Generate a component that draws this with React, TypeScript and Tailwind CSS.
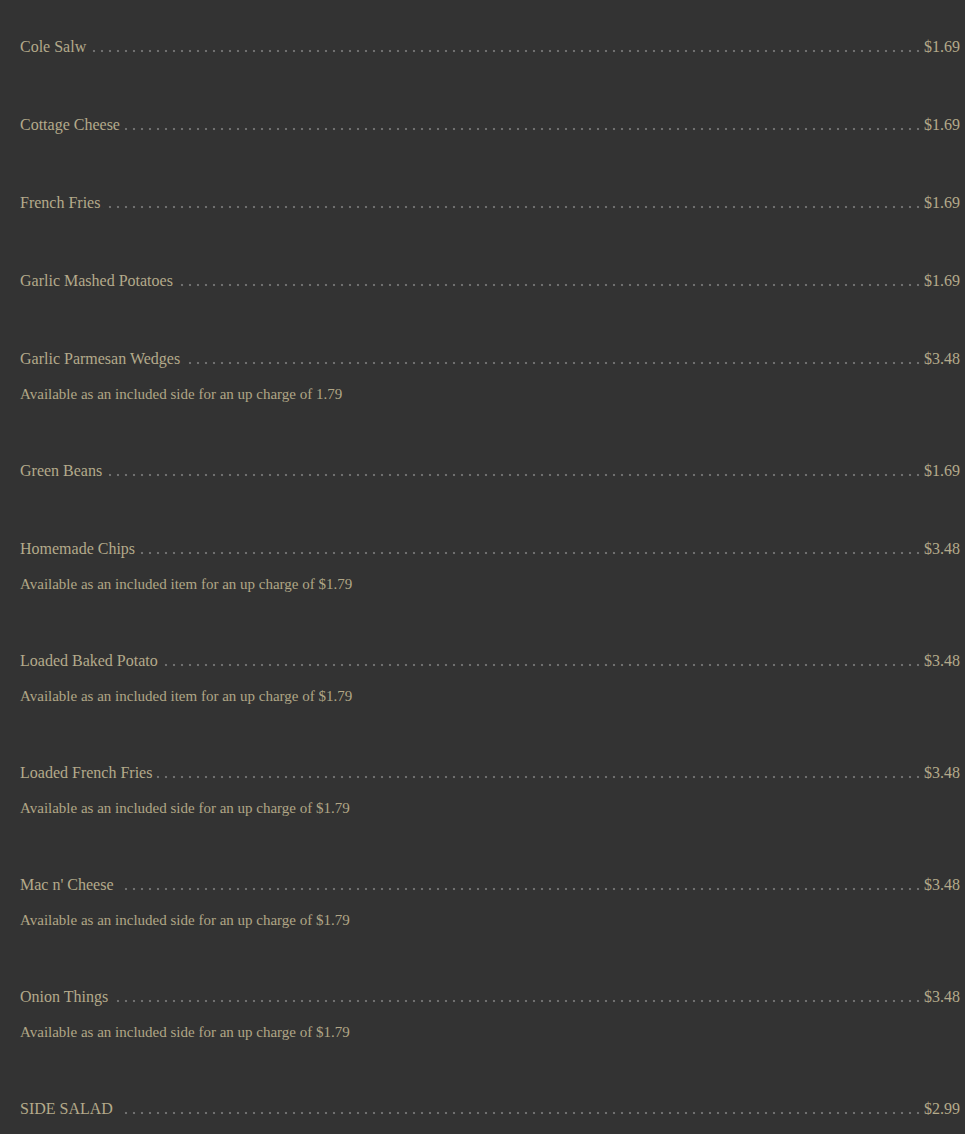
import React from "react";

type Item = {
  name: string;
  price: string;
  note?: string;
};

const items: Item[] = [
  { name: "Cole Salw", price: "$1.69" },
  { name: "Cottage Cheese", price: "$1.69" },
  { name: "French Fries", price: "$1.69" },
  { name: "Garlic Mashed Potatoes", price: "$1.69" },
  {
    name: "Garlic Parmesan Wedges",
    price: "$3.48",
    note: "Available as an included side for an up charge of 1.79",
  },
  { name: "Green Beans", price: "$1.69" },
  {
    name: "Homemade Chips",
    price: "$3.48",
    note: "Available as an included item for an up charge of $1.79",
  },
  {
    name: "Loaded Baked Potato",
    price: "$3.48",
    note: "Available as an included item for an up charge of $1.79",
  },
  {
    name: "Loaded French Fries",
    price: "$3.48",
    note: "Available as an included side for an up charge of $1.79",
  },
  {
    name: "Mac n' Cheese\u00a0",
    price: "$3.48",
    note: "Available as an included side for an up charge of $1.79",
  },
  {
    name: "Onion Things",
    price: "$3.48",
    note: "Available as an included side for an up charge of $1.79",
  },
  {
    name: "SIDE SALAD\u00a0",
    price: "$2.99",
    note: "Available as an included side for an up charge of $1.79",
  },
];

const MenuRow: React.FC<{ item: Item }> = ({ item }) => {
  return (
    <div className={item.note ? "pt-[35px] pb-[20px]" : "pt-[35px] pb-[19px]"}>
      {/* dotted leader lives on the row background, name + price cover it */}
      <div className="flex h-6 items-start justify-between bg-[radial-gradient(circle_at_2px_16px,#6f6f6f_1px,transparent_1.6px)] bg-[length:8px_24px] bg-repeat-x">
        <span className="whitespace-pre bg-[#333333] pr-[3px] text-[16px] leading-6 text-[#b4aa8b]">
          {item.name}
        </span>
        <span className="bg-[#333333] pl-[2px] text-[16px] leading-6 text-[#b4aa8b]">
          {item.price}
        </span>
      </div>
      {item.note && (
        <div className="mt-[13px] text-[15px] leading-5 text-[#b0a686]">
          {item.note}
        </div>
      )}
    </div>
  );
};

const App: React.FC = () => {
  return (
    <div className="min-h-screen bg-[#333333] pl-5 pr-[5px] font-['Liberation_Serif','Times_New_Roman',serif]">
      {items.map((item) => (
        <MenuRow key={item.name} item={item} />
      ))}
    </div>
  );
};

export default App;
